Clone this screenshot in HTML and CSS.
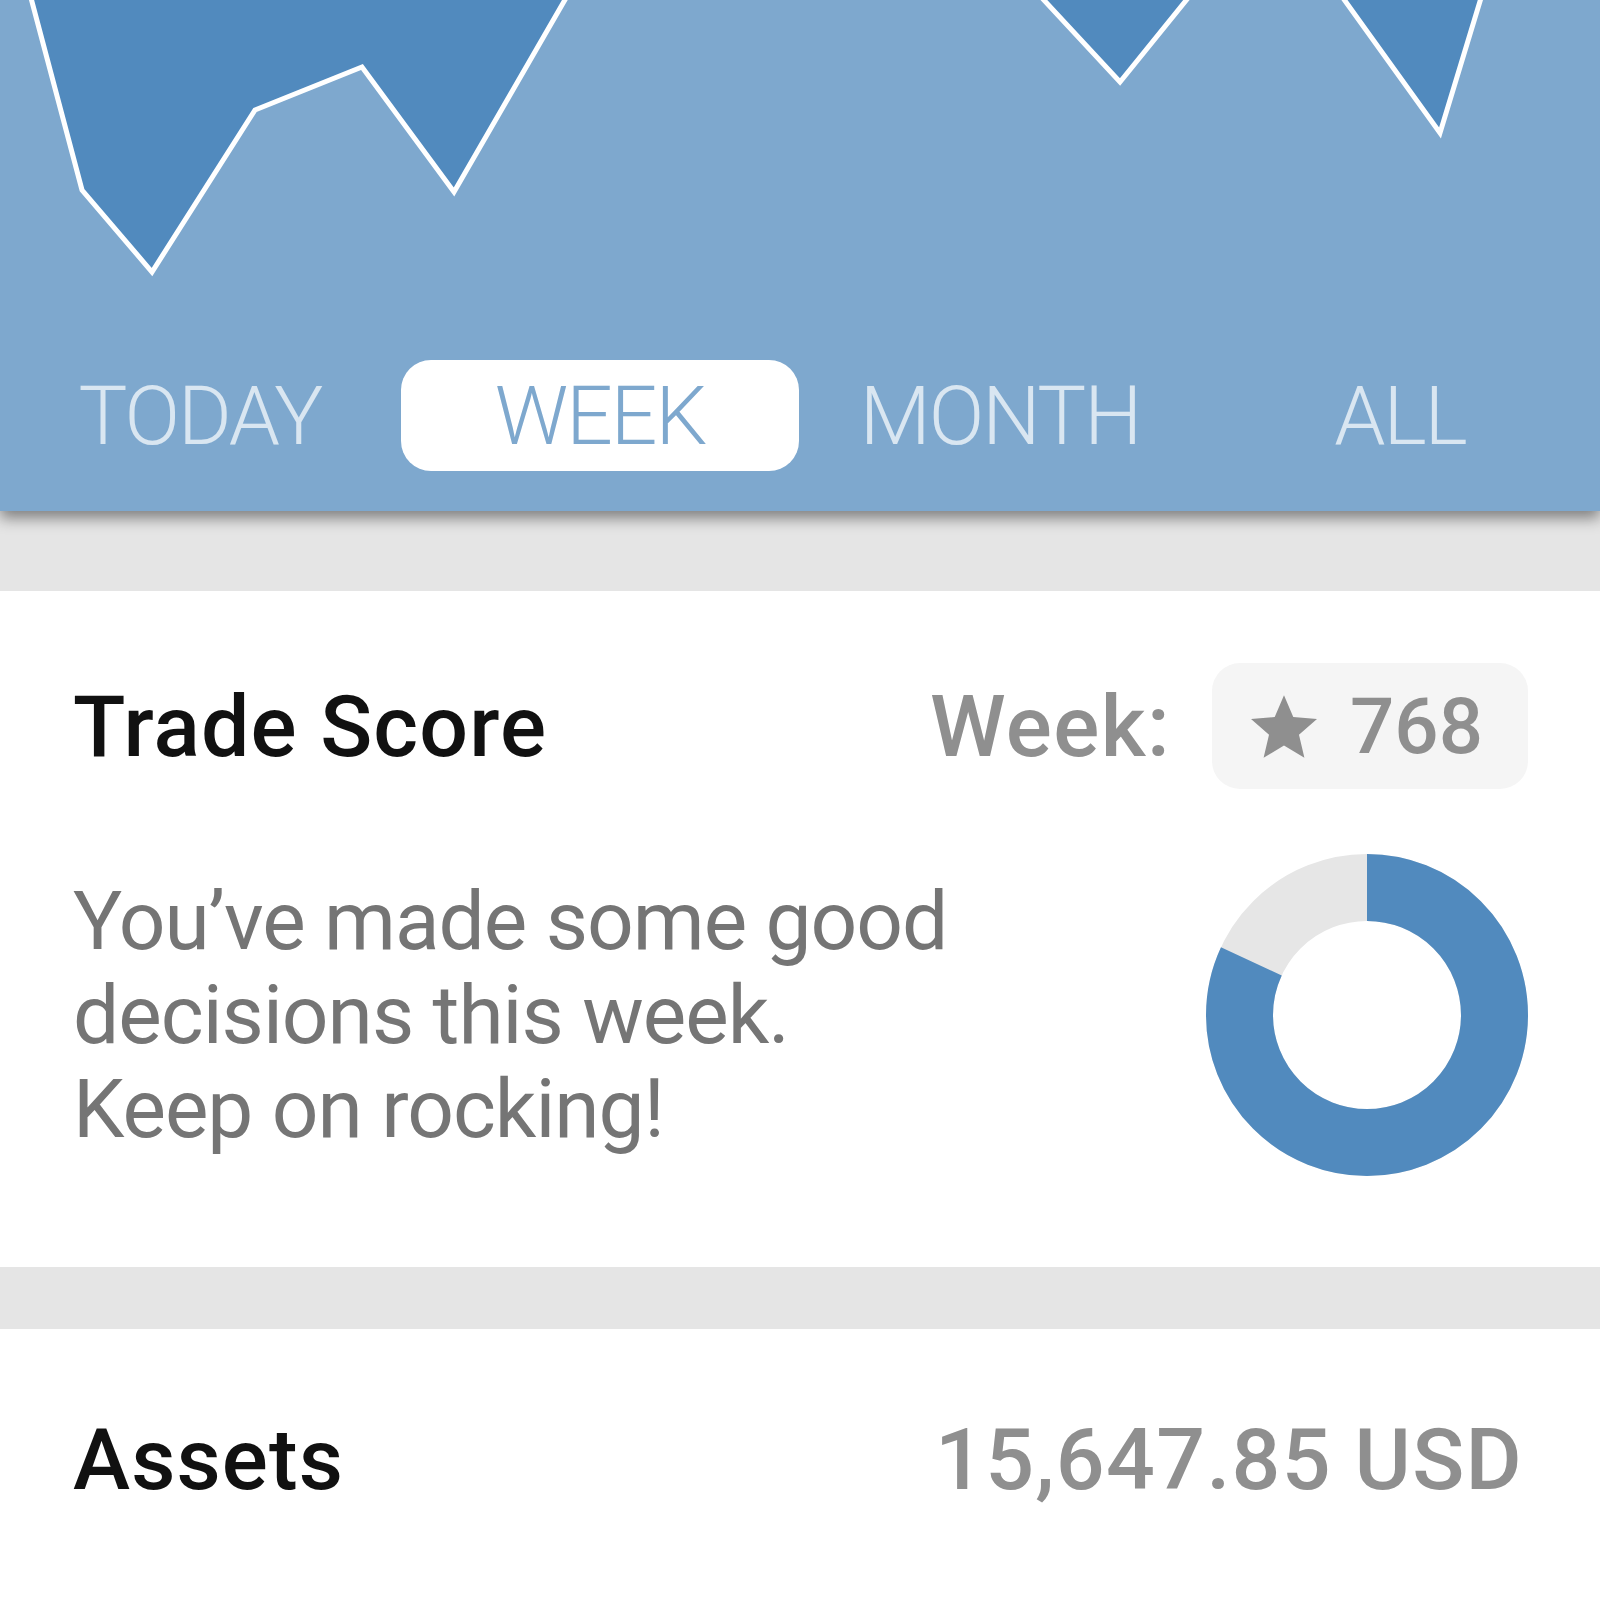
FILE: index.html
```html
<!DOCTYPE html>
<html>
<head>
<meta charset="utf-8">
<title>Trade Score</title>
<link rel="stylesheet" href="styles.css">
</head>
<body>
<div class="header">
	<svg class="chart" viewBox="0 0 1600 360" preserveAspectRatio="none">
		<polygon class="area" points="31,0 82,190 152,272 255,110 362,67 454,192 566,0"/>
		<polygon class="area" points="1042,0 1120,82 1188,0"/>
		<polygon class="area" points="1343,0 1440,133 1481,0"/>
		<polyline class="line" points="31,-2 82,190 152,272 255,110 362,67 454,192 566,-2"/>
		<polyline class="line" points="1042,-2 1120,82 1188,-2"/>
		<polyline class="line" points="1343,-2 1440,133 1481,-2"/>
	</svg>
	<ul class="tabs">
		<li>TODAY</li>
		<li class="active">WEEK</li>
		<li>MONTH</li>
		<li>ALL</li>
	</ul>
</div>

<div class="card score">
	<div class="score-head">
		<h2>Trade Score</h2>
		<div class="period">
			<span class="period-label">Week:</span>
			<span class="badge">
				<svg class="star" viewBox="2 2 20 19"><path d="M12 17.27L18.18 21l-1.64-7.03L22 9.24l-7.19-.61L12 2 9.19 8.63 2 9.24l5.46 4.73L5.82 21z"/></svg>
				768
			</span>
		</div>
	</div>
	<div class="score-body">
		<p>You’ve made some good<br>decisions this week.<br>Keep on rocking!</p>
		<svg class="donut" viewBox="0 0 322 322">
			<circle class="ring-bg" cx="161" cy="161" r="127.5"/>
			<circle class="ring" cx="161" cy="161" r="127.5" stroke-dasharray="656 801" transform="rotate(-90 161 161)"/>
		</svg>
	</div>
</div>

<div class="card assets">
	<h2>Assets</h2>
	<span class="amount">15,647.85 USD</span>
</div>
</body>
</html>
```

FILE: styles.css
```css
*{margin:0;padding:0;}
body{ background:#e5e5e5; font-family:Roboto, "Noto Sans", sans-serif;}

.header{ background:#7ea8ce; height:511px; position:relative; z-index:1; box-shadow:0 7px 14px rgba(0,0,0,.45);}
.chart{ display:block; width:100%; height:360px;}
.chart .area{ fill:#518abe;}
.chart .line{ fill:none; stroke:#fff; stroke-width:5; stroke-linejoin:miter;}

.tabs{ list-style:none; display:grid; grid-template-columns:repeat(4,1fr); height:111px;}
.tabs li{ display:flex; align-items:center; justify-content:center; margin:0 1px; font-size:82px; font-weight:300; color:#d9e6f1; letter-spacing:-2px;}
.tabs li.active{ background:#fff; color:#7ea8ce; border-radius:30px;}

.card{ background:#fff;}
.score{ margin-top:80px; padding:72px 72px 91px 73px;}
.score-head{ display:flex; align-items:center; justify-content:space-between;}
h2{ font-size:86px; font-weight:500; color:#111; letter-spacing:1.1px;}
.period{ display:flex; align-items:center; gap:41px;}
.period-label{ font-size:86px; font-weight:500; color:#8f8f8f; letter-spacing:1.4px;}
.badge{ display:flex; align-items:center; gap:33px; height:126px; padding:0 45px 0 39px; background:#f5f5f5; border-radius:28px; font-size:78px; font-weight:500; color:#8f8f8f;}
.star{ width:66px; height:63px; fill:#8f8f8f;}

.score-body{ display:flex; align-items:center; justify-content:space-between; margin-top:65px;}
.score-body p{ font-size:82px; line-height:94px; color:#757575; letter-spacing:-1px;}
.donut{ width:322px; height:322px; display:block;}
.ring-bg{ fill:none; stroke:#e6e6e6; stroke-width:67;}
.ring{ fill:none; stroke:#518abe; stroke-width:67;}

.assets{ margin-top:62px; height:261px; padding:0 77px 80px 73px; display:flex; align-items:center; justify-content:space-between;}
.amount{ font-size:86px; font-weight:500; color:#8f8f8f; letter-spacing:1.3px;}
```
